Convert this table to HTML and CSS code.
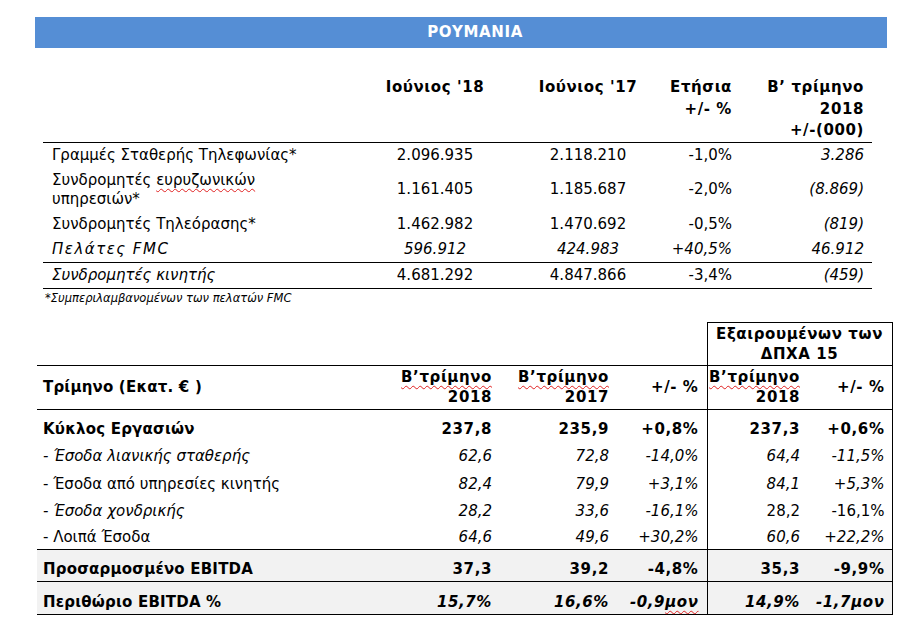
FILE: index.html
```html
<!DOCTYPE html>
<html lang="el">
<head>
<meta charset="utf-8">
<title>ΡΟΥΜΑΝΙΑ</title>
<link rel="stylesheet" href="styles.css">
</head>
<body>
<div class="page">
  <div class="banner">ΡΟΥΜΑΝΙΑ</div>

  <table class="kpi">
    <colgroup>
      <col class="k-label"><col class="k-c1"><col class="k-c2"><col class="k-c3"><col class="k-c4">
    </colgroup>
    <thead>
      <tr>
        <th></th>
        <th class="ctr c1">Ιούνιος '18</th>
        <th class="ctr">Ιούνιος '17</th>
        <th class="r">Ετήσια<br>+/- %</th>
        <th class="r">Β’ τρίμηνο<br>2018<br>+/-(000)</th>
      </tr>
    </thead>
    <tbody>
      <tr>
        <td class="lbl">Γραμμές Σταθερής Τηλεφωνίας*</td>
        <td class="ctr c1">2.096.935</td>
        <td class="ctr">2.118.210</td>
        <td class="r">-1,0%</td>
        <td class="r i">3.286</td>
      </tr>
      <tr>
        <td class="lbl">Συνδρομητές <span class="spell">ευρυζωνικών</span><br>υπηρεσιών*</td>
        <td class="ctr c1">1.161.405</td>
        <td class="ctr">1.185.687</td>
        <td class="r">-2,0%</td>
        <td class="r i">(8.869)</td>
      </tr>
      <tr>
        <td class="lbl">Συνδρομητές Τηλεόρασης*</td>
        <td class="ctr c1">1.462.982</td>
        <td class="ctr">1.470.692</td>
        <td class="r">-0,5%</td>
        <td class="r i">(819)</td>
      </tr>
      <tr class="ruled">
        <td class="lbl i wide">Πελάτες FMC</td>
        <td class="ctr c1 i">596.912</td>
        <td class="ctr i">424.983</td>
        <td class="r i">+40,5%</td>
        <td class="r i">46.912</td>
      </tr>
      <tr class="ruled">
        <td class="lbl i">Συνδρομητές κινητής</td>
        <td class="ctr c1">4.681.292</td>
        <td class="ctr">4.847.866</td>
        <td class="r">-3,4%</td>
        <td class="r i">(459)</td>
      </tr>
    </tbody>
  </table>
  <p class="note">*Συμπεριλαμβανομένων των πελατών FMC</p>

  <table class="fin">
    <colgroup>
      <col class="f-label"><col class="f-c1"><col class="f-c2"><col class="f-c3"><col class="f-c4"><col class="f-c5">
    </colgroup>
    <thead>
      <tr class="top">
        <th></th><th></th><th></th><th></th>
        <th class="box" colspan="2">Εξαιρουμένων των<br>ΔΠΧΑ 15</th>
      </tr>
      <tr class="head">
        <th class="lbl">Τρίμηνο (Εκατ. € )</th>
        <th class="r p1"><span class="spell">Β’τρίμηνο</span><br>2018</th>
        <th class="r p2"><span class="spell">Β’τρίμηνο</span><br>2017</th>
        <th class="r p3">+/- %</th>
        <th class="r p4 bl"><span class="spell">Β’τρίμηνο</span><br>2018</th>
        <th class="r p5 br">+/- %</th>
      </tr>
    </thead>
    <tbody>
      <tr class="h31 b">
        <td class="lbl">Κύκλος Εργασιών</td>
        <td class="r p1">237,8</td><td class="r p2">235,9</td><td class="r p3">+0,8%</td>
        <td class="r p4 bl">237,3</td><td class="r p5 br">+0,6%</td>
      </tr>
      <tr class="h27 i">
        <td class="lbl">- Έσοδα λιανικής σταθερής</td>
        <td class="r p1">62,6</td><td class="r p2">72,8</td><td class="r p3">-14,0%</td>
        <td class="r p4 bl">64,4</td><td class="r p5 br">-11,5%</td>
      </tr>
      <tr class="h28 i">
        <td class="lbl up">- Έσοδα από υπηρεσίες κινητής</td>
        <td class="r p1">82,4</td><td class="r p2">79,9</td><td class="r p3">+3,1%</td>
        <td class="r p4 bl">84,1</td><td class="r p5 br">+5,3%</td>
      </tr>
      <tr class="h27 i">
        <td class="lbl">- Έσοδα χονδρικής</td>
        <td class="r p1">28,2</td><td class="r p2">33,6</td><td class="r p3">-16,1%</td>
        <td class="r p4 bl up">28,2</td><td class="r p5 br up">-16,1%</td>
      </tr>
      <tr class="h26 i">
        <td class="lbl up">- Λοιπά Έσοδα</td>
        <td class="r p1">64,6</td><td class="r p2">49,6</td><td class="r p3">+30,2%</td>
        <td class="r p4 bl">60,6</td><td class="r p5 br">+22,2%</td>
      </tr>
      <tr class="h31 b shade ruled">
        <td class="lbl">Προσαρμοσμένο EBITDA</td>
        <td class="r p1">37,3</td><td class="r p2">39,2</td><td class="r p3">-4,8%</td>
        <td class="r p4 bl">35,3</td><td class="r p5 br">-9,9%</td>
      </tr>
      <tr class="h32 b shade ruled">
        <td class="lbl">Περιθώριο EBITDA %</td>
        <td class="r p1 i">15,7%</td><td class="r p2 i">16,6%</td><td class="r p3 i">-0,9<span class="spell">μον</span></td>
        <td class="r p4 bl i">14,9%</td><td class="r p5 br i">-1,7μον</td>
      </tr>
    </tbody>
  </table>
</div>
</body>
</html>
```

FILE: styles.css
```css
html, body {
  margin: 0;
  padding: 0;
  background: #fff;
}

body {
  font-family: "DejaVu Sans", "Liberation Sans", sans-serif;
  color: #000;
}

.page {
  width: 914px;
  height: 631px;
  padding-top: 17px;
  box-sizing: border-box;
  overflow: hidden;
}

.banner {
  margin-left: 35px;
  width: 852px;
  height: 31px;
  background: #558ed5;
  color: #fff;
  font-weight: bold;
  font-size: 15px;
  letter-spacing: 0.6px;
  line-height: 31px;
  text-align: center;
  padding-left: 28px;
  box-sizing: border-box;
}

table {
  border-collapse: collapse;
  table-layout: fixed;
  border-spacing: 0;
}

th, td {
  padding: 0;
  white-space: nowrap;
  overflow: visible;
}

th, .b { letter-spacing: 0.6px; }

.r { text-align: right; }
.ctr { text-align: center; }
.i { font-style: italic; }
.up { font-style: normal; }
.b { font-weight: bold; }

.spell {
  text-decoration: underline wavy #e02020;
  text-decoration-thickness: 1px;
  text-underline-offset: 3px;
  text-decoration-skip-ink: none;
}

/* ---------- top KPI table ---------- */
.kpi {
  margin-left: 43px;
  margin-top: 29px;
  width: 829px;
  font-size: 15px;
}

.k-label { width: 327px; }
.k-c1 { width: 153px; }
.k-c2 { width: 130px; }
.k-c3 { width: 87px; }
.k-c4 { width: 132px; }

.kpi th {
  font-weight: bold;
  line-height: 21.5px;
  vertical-align: top;
  border-bottom: 1px solid #000;
  padding-bottom: 0;
}

.kpi .c1 { padding-right: 23px; }
.kpi .r { padding-right: 8px; }

.kpi td {
  line-height: 19px;
  padding-top: 3px;
  padding-bottom: 3px;
  vertical-align: middle;
}

.kpi td.lbl { padding-left: 9px; }
.kpi td.wide { letter-spacing: 1.5px; }

.kpi tr.ruled td { border-bottom: 1px solid #000; }

.note {
  margin: 2px 0 0 45px;
  font-size: 11.5px;
  font-style: italic;
  line-height: 14px;
}

/* ---------- bottom financial table ---------- */
.fin {
  margin-left: 37px;
  margin-top: 17px;
  width: 855px;
  font-size: 15px;
}

.f-label { width: 363px; }
.f-c1 { width: 98px; }
.f-c2 { width: 117px; }
.f-c3 { width: 92px; }
.f-c4 { width: 100px; }
.f-c5 { width: 85px; }

.fin th {
  font-weight: bold;
  line-height: 20px;
  vertical-align: middle;
}

.fin tr.top th { height: 42px; }

.fin th.box {
  text-align: center;
  border-top: 1px solid #000;
  border-left: 1px solid #000;
  border-right: 1px solid #000;
}

.fin tr.head th {
  height: 43px;
  border-top: 1px solid #000;
  border-bottom: 1px solid #000;
}

.fin th.lbl { text-align: left; }

.fin .lbl { padding-left: 6px; }
.fin th.lbl, .fin .b .lbl { letter-spacing: 0.2px; }
.fin .p1 { padding-right: 6px; }
.fin .p2 { padding-right: 6px; }
.fin .p3 { padding-right: 8px; }
.fin .p4 { padding-right: 7px; }
.fin .p5 { padding-right: 7px; }

.fin .bl { border-left: 1px solid #000; }
.fin .br { border-right: 1px solid #000; }

.fin td {
  line-height: 20px;
  vertical-align: bottom;
  padding-bottom: 2px;
}

.fin tr.h31 td { height: 29px; }
.fin tr.h27 td { height: 25px; }
.fin tr.h28 td { height: 26px; }
.fin tr.h26 td { height: 24px; }
.fin tr.h32 td { height: 30px; }

.fin tr.shade td { background: #f2f2f2; }
.fin tr.ruled td { border-top: 1px solid #000; border-bottom: 1px solid #000; }
```
